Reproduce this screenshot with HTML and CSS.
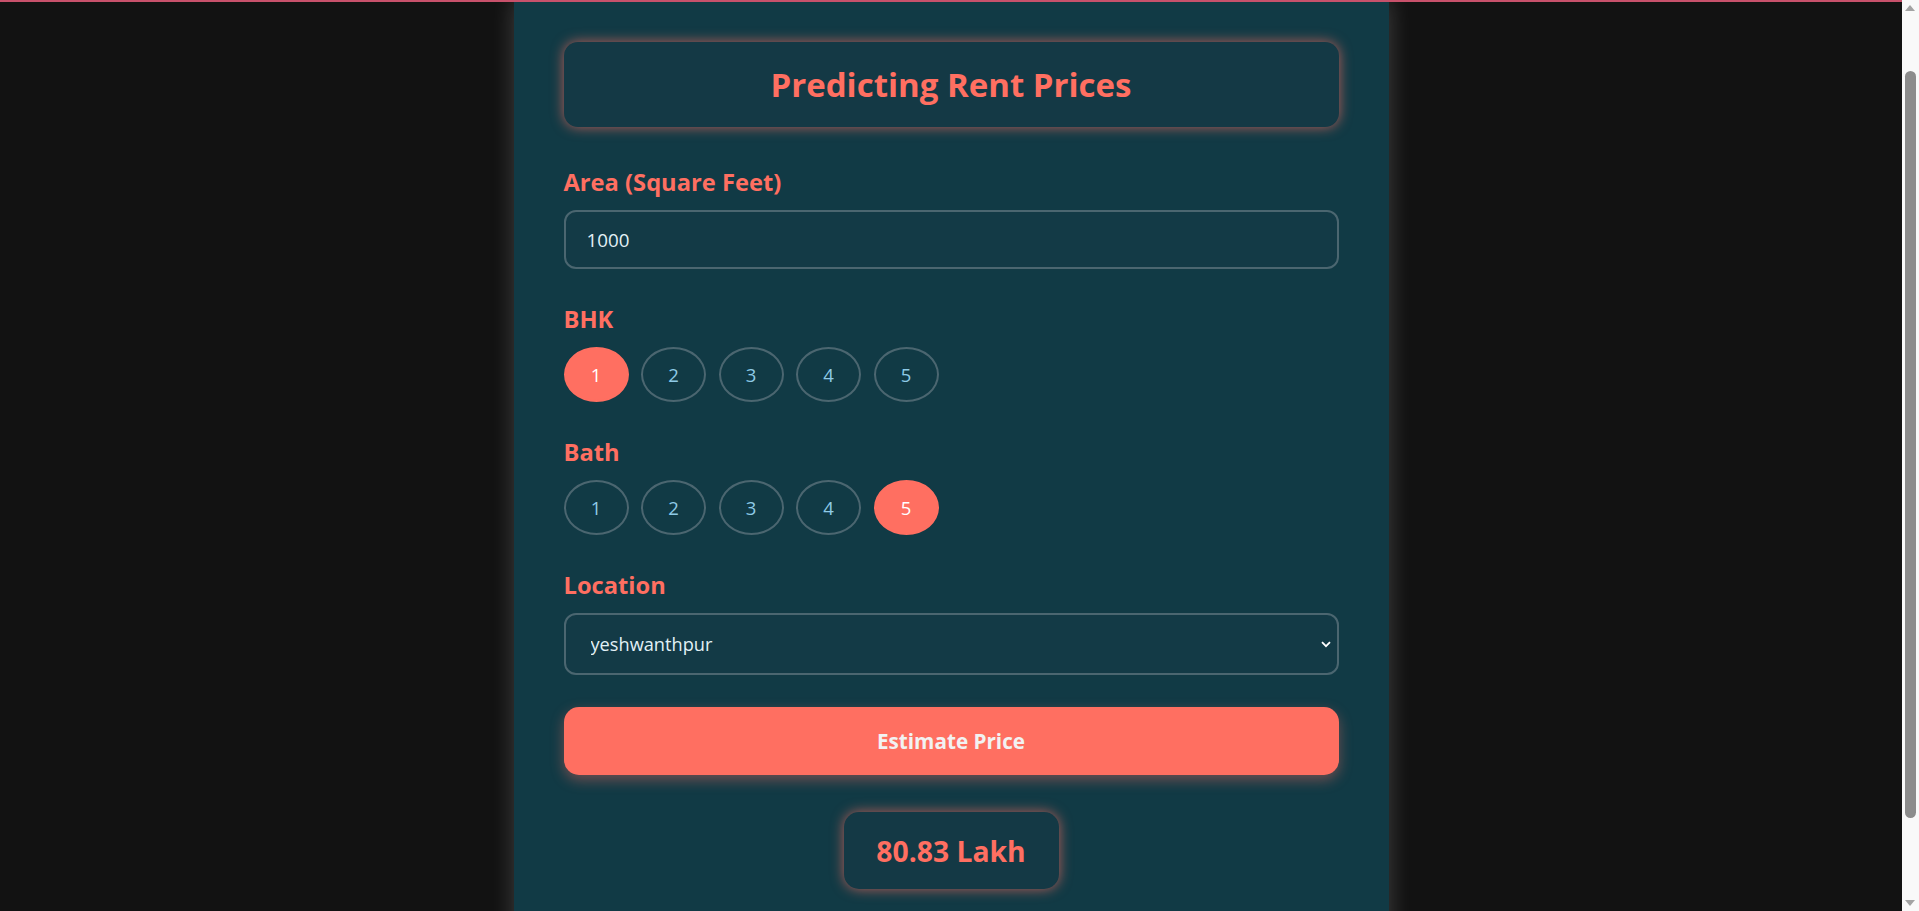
FILE: index.html
```html
<!DOCTYPE html>
<html lang="en">
<head>
<meta charset="utf-8">
<title>Predicting Rent Prices</title>
<link rel="stylesheet" href="styles.css">
</head>
<body>
<div class="topline"></div>
<div class="scrollbar" aria-hidden="true">
  <svg class="sb-arrow sb-up" width="10" height="6" viewBox="0 0 10 6"><path d="M0 6 L5 0 L10 6 Z" fill="#a3a3a3"/></svg>
  <div class="sb-thumb"></div>
  <svg class="sb-arrow sb-down" width="10" height="6" viewBox="0 0 10 6"><path d="M0 0 L5 6 L10 0 Z" fill="#a3a3a3"/></svg>
</div>
<main class="container">
  <div class="title-box"><h1 class="title">Predicting Rent Prices</h1></div>
  <form class="form">
    <div class="group">
      <label class="label" for="area">Area (Square Feet)</label>
      <input class="field" id="area" type="text" value="1000">
    </div>
    <div class="group">
      <div class="label">BHK</div>
      <div class="pills">
        <span class="pill active">1</span>
        <span class="pill">2</span>
        <span class="pill">3</span>
        <span class="pill">4</span>
        <span class="pill">5</span>
      </div>
    </div>
    <div class="group">
      <div class="label">Bath</div>
      <div class="pills">
        <span class="pill">1</span>
        <span class="pill">2</span>
        <span class="pill">3</span>
        <span class="pill">4</span>
        <span class="pill active">5</span>
      </div>
    </div>
    <div class="group last">
      <label class="label" for="loc">Location</label>
      <div class="select-wrap">
        <select class="field select" id="loc">
          <option>yeshwanthpur</option>
        </select>
        <svg class="chevron" width="10" height="7" viewBox="0 0 10 7"><path d="M1 1.2 L5 5.2 L9 1.2" fill="none" stroke="#ffffff" stroke-width="1.8"/></svg>
      </div>
    </div>
    <button class="estimate" type="button">Estimate Price</button>
    <div class="result-row"><div class="result">80.83 Lakh</div></div>
  </form>
</main>
</body>
</html>
```
FILE: styles.css
```css
html {
  overflow: hidden;
}
html, body {
  margin: 0;
  padding: 0;
}
body {
  background: #121212;
  font-family: "Open Sans", "Noto Sans", Arial, sans-serif;
  color: #e6f2f5;
  margin-right: 17px;
  min-height: 911px;
}
.topline {
  position: fixed;
  top: 0;
  left: 0;
  right: 17px;
  height: 2px;
  background: #c8516b;
  z-index: 10;
}
.scrollbar {
  position: fixed;
  top: 0;
  right: 0;
  width: 17px;
  height: 911px;
  background: #f9f9f9;
  z-index: 10;
}
.sb-arrow {
  position: absolute;
  left: 3px;
}
.sb-up {
  top: 5px;
}
.sb-down {
  bottom: 5px;
}
.sb-thumb {
  position: absolute;
  left: 3px;
  width: 11px;
  top: 71px;
  height: 747px;
  border-radius: 6px;
  background: #8c8c8c;
}
.container {
  width: 875px;
  box-sizing: border-box;
  margin: 0 auto;
  padding: 42px 50px 140px;
  background: #113a45;
  box-shadow: 0 0 22px rgba(255, 255, 255, 0.2);
}
.title-box {
  height: 85px;
  box-sizing: border-box;
  display: flex;
  align-items: center;
  justify-content: center;
  background: #143945;
  border-radius: 14px;
  box-shadow: 0 0 13px rgba(255, 111, 97, 0.7);
  margin-bottom: 39px;
}
.title {
  margin: 0;
  font-size: 33px;
  line-height: 44px;
  font-weight: 700;
  color: #ff6f61;
}
.form {
  display: flex;
  flex-direction: column;
}
.group {
  display: flex;
  flex-direction: column;
  margin-bottom: 34px;
}
.group.last {
  margin-bottom: 32px;
}
.label {
  display: block;
  font-size: 23.7px;
  line-height: 32px;
  font-weight: 700;
  color: #ff6f61;
  margin-bottom: 12px;
}
.field {
  box-sizing: border-box;
  width: 100%;
  height: 59px;
  padding: 0 21px;
  border: 2px solid #4b6670;
  border-radius: 12px;
  background: #133a46;
  color: #e2f1f6;
  font-family: inherit;
  font-size: 18.8px;
  outline: none;
}
.select-wrap {
  position: relative;
}
.select {
  height: 62px;
  appearance: none;
  -webkit-appearance: none;
  padding-left: 25px;
  font-size: 18.2px;
}
.chevron {
  position: absolute;
  right: 8px;
  top: 28px;
}
.pills {
  display: flex;
  gap: 12.5px;
}
.pill {
  box-sizing: border-box;
  width: 65px;
  height: 55px;
  border: 2px solid #4b6670;
  border-radius: 50%;
  display: flex;
  align-items: center;
  justify-content: center;
  font-size: 18.5px;
  color: #8ecae6;
}
.pill.active {
  background: #ff6f61;
  border-color: #ff6f61;
  color: #ffffff;
}
.estimate {
  height: 68px;
  border: none;
  border-radius: 15px;
  background: #ff6f61;
  color: #f2f2f2;
  font-family: inherit;
  font-size: 20.7px;
  font-weight: 700;
  box-shadow: 0 5px 14px rgba(255, 111, 97, 0.4);
}
.result-row {
  display: flex;
  justify-content: center;
  margin-top: 37px;
}
.result {
  width: 215px;
  height: 77px;
  box-sizing: border-box;
  display: flex;
  align-items: center;
  justify-content: center;
  background: #143945;
  border-radius: 15px;
  box-shadow: 0 0 13px rgba(255, 111, 97, 0.7);
  color: #ff6f61;
  font-size: 28.3px;
  font-weight: 700;
}
```
